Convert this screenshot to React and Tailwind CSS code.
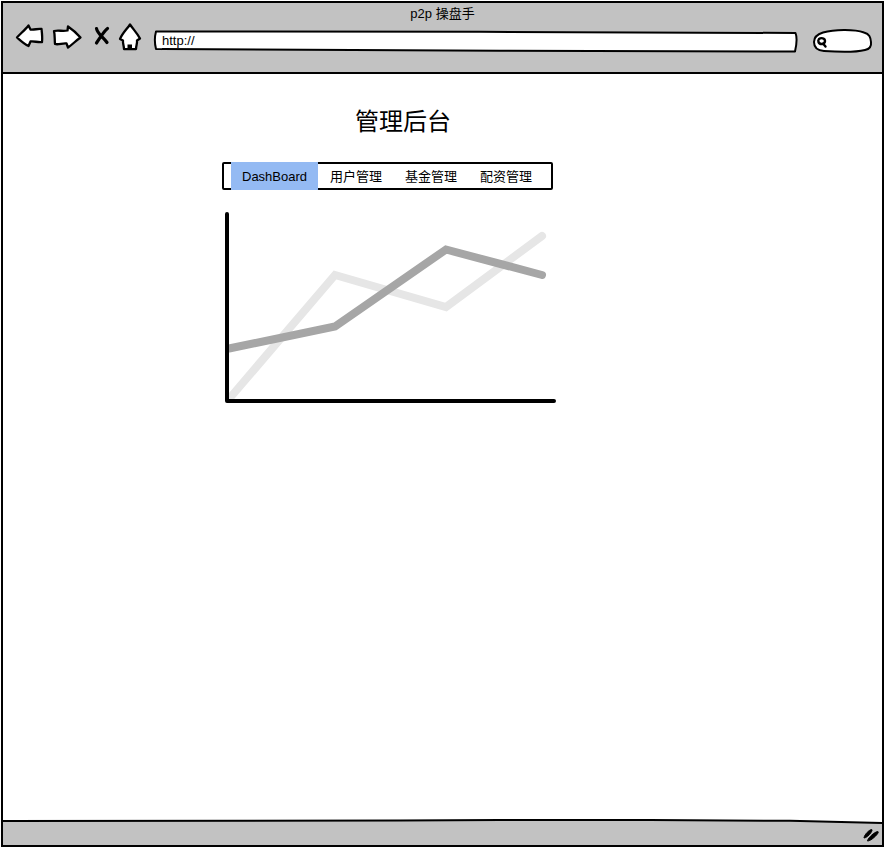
const navTabs = ["DashBoard", "用户管理", "基金管理", "配资管理"];

const ink = {
  stroke: "#000",
  strokeWidth: 2,
  strokeLinejoin: "round",
  strokeLinecap: "round",
};

function BackIcon() {
  return (
    <svg viewBox="16 24 28 32" className="block h-8 w-7 overflow-visible" aria-hidden="true">
      <path
        {...ink}
        strokeWidth="2.3"
        fill="#fff"
        d="M17 37.500 C20 34 25 30 28.500 25.500 L30.500 29.500 C34 30 38 28.500 41.500 29 C42 33 42.500 38 42 42 C38 42.500 34 41 30.500 41.500 L28.500 46 C24 44 20.500 40.500 17 37.500 Z"
      />
    </svg>
  );
}

function ForwardIcon() {
  return (
    <svg viewBox="52 24 30 32" className="block h-8 w-[30px] overflow-visible" aria-hidden="true">
      <path
        {...ink}
        strokeWidth="2.3"
        fill="#fff"
        d="M54 31 C58.500 30 63 31.500 67.500 30.500 L68 26.500 C72.500 29.500 76.500 33 80.500 37.500 C76 40.500 72.500 44.500 68 47.500 L66.500 43.500 C62.500 43 58.500 45 55 44 C54.500 39 55 35 54 31 Z"
      />
    </svg>
  );
}

function StopIcon() {
  return (
    <svg viewBox="90 24 20 32" className="block h-8 w-5 overflow-visible" aria-hidden="true">
      <path
        {...ink}
        strokeWidth="3.2"
        fill="none"
        d="M96.500 28.500 C97.500 34 104 38 107 42.500 M107.500 28.500 C104 31 100 38 96.500 43"
      />
    </svg>
  );
}

function HomeIcon() {
  return (
    <svg viewBox="118 24 26 32" className="block h-8 w-[26px] overflow-visible" aria-hidden="true">
      <path
        {...ink}
        strokeWidth="2.3"
        fill="#fff"
        d="M130 24.500 C133 29 137 33 140 38.500 L137 40.500 C137.500 43 136 46 136 49 C132 49 128 49.500 124 49 C124 46 122.500 43 123 40.500 L120 39 C122.500 33 127 29 130 24.500 Z"
      />
      <rect x="127.500" y="44.500" width="4.500" height="4.500" />
    </svg>
  );
}

function Toolbar() {
  return (
    <header className="h-[71px] border-b-2 border-black bg-[#c2c2c2] pt-px">
      <div className="text-center leading-5">p2p 操盘手</div>
      <div className="flex pl-[13px] pr-[10px]">
        <div className="flex gap-2">
          <button type="button" aria-label="Back"><BackIcon /></button>
          <button type="button" aria-label="Forward"><ForwardIcon /></button>
          <button type="button" aria-label="Stop"><StopIcon /></button>
          <button type="button" aria-label="Home"><HomeIcon /></button>
        </div>
        <div className="relative ml-[10px] h-8 min-w-0 flex-1">
          <svg
            viewBox="154 24 643 32"
            preserveAspectRatio="none"
            className="absolute inset-0 h-full w-full overflow-visible"
            aria-hidden="true"
          >
            <path
              {...ink}
              vectorEffect="non-scaling-stroke"
              fill="#fff"
              d="M156 31.500 C300 31 400 31.500 480 31.800 C600 31.500 720 32.500 795.500 33 C797.500 38 796.500 45 795 51.500 C700 51.500 600 51 500 50.800 C400 50 300 50 156 49 C154.500 43 154.500 37 156 31.500 Z"
            />
          </svg>
          <input
            aria-label="Address"
            defaultValue="http://"
            className="relative h-8 w-full bg-transparent px-2 outline-none"
          />
        </div>
        <div className="relative ml-4 h-8 w-[59px]">
          <svg viewBox="813 24 59 32" className="absolute inset-0 h-full w-full overflow-visible" aria-hidden="true">
            <path
              {...ink}
              fill="#fff"
              d="M823 32.500 C834 29.500 854 29 864 32.500 C869.500 34 870.500 37 871 42 C871.500 46 870 49 865 50 C855 52.500 838 52 824 51 C817 50.500 814 47 814 42 C814 37 818 34 823 32.500 Z"
            />
            <path
              {...ink}
              strokeWidth="2.4"
              fill="none"
              d="M819 39 C821 37.500 825 38 825 41 C825 44.500 819.500 45 818.500 42 C818 40.500 818.500 39.500 819 39 M823 43.500 L825.500 46.500"
            />
          </svg>
          <input
            aria-label="Search"
            className="relative h-8 w-full bg-transparent pl-4 pr-2 outline-none"
          />
        </div>
      </div>
    </header>
  );
}

function TabBar() {
  return (
    <nav className="mt-6 flex h-7 w-[331px] items-center gap-px rounded-xs border-2 border-black pl-[7px]">
      {navTabs.map((label, i) => (
        <a
          key={label}
          href="#"
          aria-current={i === 0 ? "page" : undefined}
          className={
            "flex h-7 shrink-0 items-center px-[11px] pt-0.5 " + (i === 0 ? "bg-[#94baf3]" : "")
          }
        >
          {label}
        </a>
      ))}
    </nav>
  );
}

function LineChart() {
  return (
    <svg
      viewBox="222 212 335 192"
      className="mt-[22px] block h-48 w-[335px]"
      role="img"
      aria-label="Line chart"
    >
      <g fill="none" strokeWidth="8" strokeLinecap="round" strokeLinejoin="miter">
        <path stroke="#e6e6e6" d="M229 399 L335 275 L446 307 L542 236" />
        <path stroke="#a6a6a6" d="M229 348.500 L335 326.500 L446 249.500 L542 275" />
      </g>
      <path fill="#fff" d="M222 212 H226 V404 H222 Z" />
      <path
        fill="none"
        stroke="#000"
        strokeWidth="4"
        strokeLinecap="round"
        strokeLinejoin="round"
        d="M227 214 V401 H554"
      />
    </svg>
  );
}

function StatusBar() {
  return (
    <footer className="relative h-[26px]">
      <svg
        viewBox="3 819 879 26"
        preserveAspectRatio="none"
        className="absolute inset-0 h-full w-full"
        aria-hidden="true"
      >
        <path fill="#c2c2c2" d="M3 820.500 L400 820 H650 L790 820.800 L882 823 V846 H3 Z" />
        <path
          fill="none"
          stroke="#000"
          strokeWidth="2"
          vectorEffect="non-scaling-stroke"
          d="M3 821 L400 820.500 L500 820 H650 L790 820.800 L882 823"
        />
      </svg>
      <svg viewBox="862 827 18 16" className="relative ml-auto mr-[2px] mt-2 block h-4 w-[18px]" aria-hidden="true">
        <path
          stroke="#000"
          d="M864 837.500 C865 834 869 830 871.500 829.500 C872.500 829.500 872 831 871 832.500 C869.500 835 866 838 864 838 Z M867.500 840.500 C869 837 874 832.500 877.500 831.500 C879 831.500 878 833.500 876.500 835 C874.500 837.500 870 841 867.500 841 Z"
        />
      </svg>
    </footer>
  );
}

export default function App() {
  return (
    <div className="flex min-h-screen bg-white p-px text-[13px] leading-5 text-black [font-family:'Liberation_Sans','Noto_Sans_CJK_SC',sans-serif]">
      <div className="flex w-full flex-col border-2 border-black">
        <Toolbar />
        <main className="flex-1 pl-[219px] pt-8">
          <h1 className="pl-[133px] text-2xl leading-8">管理后台</h1>
          <TabBar />
          <LineChart />
        </main>
        <StatusBar />
      </div>
    </div>
  );
}
